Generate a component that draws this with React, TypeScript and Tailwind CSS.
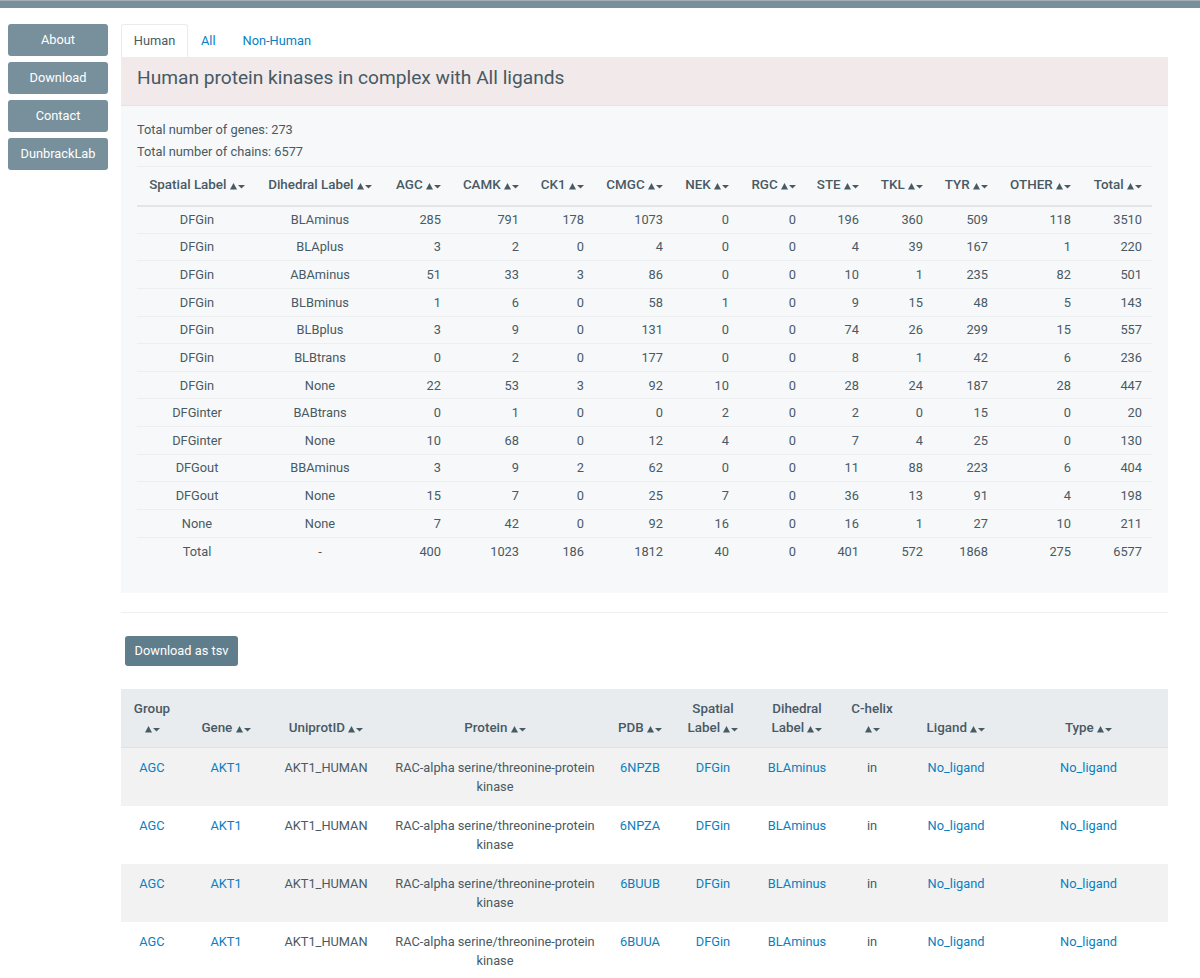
import React from 'react'

const navItems = ['About', 'Download', 'Contact', 'DunbrackLab']

const groups = ['AGC', 'CAMK', 'CK1', 'CMGC', 'NEK', 'RGC', 'STE', 'TKL', 'TYR', 'OTHER', 'Total']

const summary: [string, string, ...number[]][] = [
  ['DFGin', 'BLAminus', 285, 791, 178, 1073, 0, 0, 196, 360, 509, 118, 3510],
  ['DFGin', 'BLAplus', 3, 2, 0, 4, 0, 0, 4, 39, 167, 1, 220],
  ['DFGin', 'ABAminus', 51, 33, 3, 86, 0, 0, 10, 1, 235, 82, 501],
  ['DFGin', 'BLBminus', 1, 6, 0, 58, 1, 0, 9, 15, 48, 5, 143],
  ['DFGin', 'BLBplus', 3, 9, 0, 131, 0, 0, 74, 26, 299, 15, 557],
  ['DFGin', 'BLBtrans', 0, 2, 0, 177, 0, 0, 8, 1, 42, 6, 236],
  ['DFGin', 'None', 22, 53, 3, 92, 10, 0, 28, 24, 187, 28, 447],
  ['DFGinter', 'BABtrans', 0, 1, 0, 0, 2, 0, 2, 0, 15, 0, 20],
  ['DFGinter', 'None', 10, 68, 0, 12, 4, 0, 7, 4, 25, 0, 130],
  ['DFGout', 'BBAminus', 3, 9, 2, 62, 0, 0, 11, 88, 223, 6, 404],
  ['DFGout', 'None', 15, 7, 0, 25, 7, 0, 36, 13, 91, 4, 198],
  ['None', 'None', 7, 42, 0, 92, 16, 0, 16, 1, 27, 10, 211],
  ['Total', '-', 400, 1023, 186, 1812, 40, 0, 401, 572, 1868, 275, 6577],
]

const summaryWidths = [120, 126, 68, 78, 65, 79, 66, 67, 63, 64, 65, 83, 71]

const chains = ['6NPZB', '6NPZA', '6BUUB', '6BUUA']

const chainWidths = [62, 86, 114, 224, 66, 80, 88, 62, 106, 159]

const chainHeaders = [
  ['Group'],
  ['Gene'],
  ['UniprotID'],
  ['Protein'],
  ['PDB'],
  ['Spatial', 'Label'],
  ['Dihedral', 'Label'],
  ['C-helix'],
  ['Ligand'],
  ['Type'],
]

function SortArrows() {
  return (
    <svg width="15" height="8" viewBox="0 0 15 8" fill="currentColor" className="inline-block align-[-0.5px]">
      <path d="M0 7.5 L3.5 1 L7 7.5 Z" />
      <path d="M8 3 L15 3 L11.5 6.5 Z" />
    </svg>
  )
}

function ChainLink({ children }: { children: React.ReactNode }) {
  return <a className="text-[#0880c0]">{children}</a>
}

export default function App() {
  return (
    <div className="h-[978px] overflow-hidden bg-white font-['Roboto',sans-serif] text-[12.8px] text-[#485a64]">
      <div className="h-2 border-t border-[#a3aeb5] bg-[#78909c]" />
      <div className="flex pt-4">
        <nav className="ml-2 flex w-[100px] shrink-0 flex-col gap-1.5">
          {navItems.map((item) => (
            <button key={item} className="h-8 rounded-[3px] bg-[#78909c] text-[12.8px] text-white">
              {item}
            </button>
          ))}
        </nav>
        <main className="ml-[13px] w-[1047px]">
          <div className="flex h-[33px] items-stretch">
            <span className="flex w-[67px] items-center justify-center rounded-t-[3px] border border-b-0 border-[#e9ecef] bg-white">
              Human
            </span>
            <a className="flex items-center px-[13px] text-[#0880c0]">All</a>
            <a className="flex items-center px-[14px] text-[#0880c0]">Non-Human</a>
          </div>

          <div className="bg-[#f7f8fa] pb-[28px]">
            <h1 className="h-[49px] border-b border-[#e6e3e4] bg-[#f2e9ea] pl-4 text-[19.15px] leading-[42px] text-[#455a64]">
              Human protein kinases in complex with All ligands
            </h1>
            <div className="px-4 pt-[13px]">
              <p className="leading-[21px]">Total number of genes: 273</p>
              <p className="mt-[1px] leading-[21px]">Total number of chains: 6577</p>
              <table className="mt-[4px] w-[1015px] table-fixed border-collapse">
                <colgroup>
                  {summaryWidths.map((width, i) => (
                    <col key={i} style={{ width }} />
                  ))}
                </colgroup>
                <thead className="text-[13.4px]">
                  <tr className="h-[39px] border-y border-t-[#eceef0] border-b-[#e3e6e8] [border-bottom-width:2px]">
                    <th className="px-0 pb-[1px] text-center font-medium whitespace-nowrap">Spatial Label <SortArrows /></th>
                    <th className="px-0 pb-[1px] text-center font-medium whitespace-nowrap">Dihedral Label <SortArrows /></th>
                    {groups.map((group) => (
                      <th key={group} className="px-[10px] pb-[1px] text-right font-medium whitespace-nowrap">
                        {group} <SortArrows />
                      </th>
                    ))}
                  </tr>
                </thead>
                <tbody>
                  {summary.map((row) => (
                    <tr key={row[0] + row[1]} className="h-[27.65px] border-b border-[#eceef0] last:border-b-0">
                      {row.map((cell, i) => (
                        <td key={i} className={i < 2 ? 'text-center' : 'px-[10px] text-right'}>
                          {cell}
                        </td>
                      ))}
                    </tr>
                  ))}
                </tbody>
              </table>
            </div>
          </div>

          <hr className="mt-[19px] border-t border-[#eeeff1]" />

          <button className="mt-[23px] ml-1 h-[30px] w-[113px] rounded-[3px] bg-[#607d8b] text-[12.8px] text-white">
            Download as tsv
          </button>

          <table className="mt-[23px] w-[1047px] table-fixed border-collapse">
            <colgroup>
              {chainWidths.map((width, i) => (
                <col key={i} style={{ width }} />
              ))}
            </colgroup>
            <thead className="text-[13.4px]">
              <tr className="h-[59px] border-b border-[#dee2e6] bg-[#e9ecef]">
                {chainHeaders.map((lines) => (
                  <th key={lines[0]} className="px-0 pb-[10px] text-center align-bottom leading-[19px] font-medium whitespace-nowrap">
                    {lines.length > 1 ? (
                      <>
                        {lines[0]}
                        <br />
                        {lines[1]} <SortArrows />
                      </>
                    ) : lines[0] === 'Group' || lines[0] === 'C-helix' ? (
                      <>
                        {lines[0]}
                        <br />
                        <SortArrows />
                      </>
                    ) : (
                      <>
                        {lines[0]} <SortArrows />
                      </>
                    )}
                  </th>
                ))}
              </tr>
            </thead>
            <tbody>
              {chains.map((pdb, i) => (
                <tr key={pdb} className={`h-[58px] text-center align-top leading-[19px] ${i % 2 === 0 ? 'bg-[#f2f2f2]' : 'bg-white'}`}>
                  <td className="pt-[10px]"><ChainLink>AGC</ChainLink></td>
                  <td className="pt-[10px]"><ChainLink>AKT1</ChainLink></td>
                  <td className="pt-[10px]">AKT1_HUMAN</td>
                  <td className="pt-[10px] pb-[10px]">RAC-alpha serine/threonine-protein kinase</td>
                  <td className="pt-[10px]"><ChainLink>{pdb}</ChainLink></td>
                  <td className="pt-[10px]"><ChainLink>DFGin</ChainLink></td>
                  <td className="pt-[10px]"><ChainLink>BLAminus</ChainLink></td>
                  <td className="pt-[10px]">in</td>
                  <td className="pt-[10px]"><ChainLink>No_ligand</ChainLink></td>
                  <td className="pt-[10px]"><ChainLink>No_ligand</ChainLink></td>
                </tr>
              ))}
            </tbody>
          </table>
        </main>
      </div>
    </div>
  )
}
